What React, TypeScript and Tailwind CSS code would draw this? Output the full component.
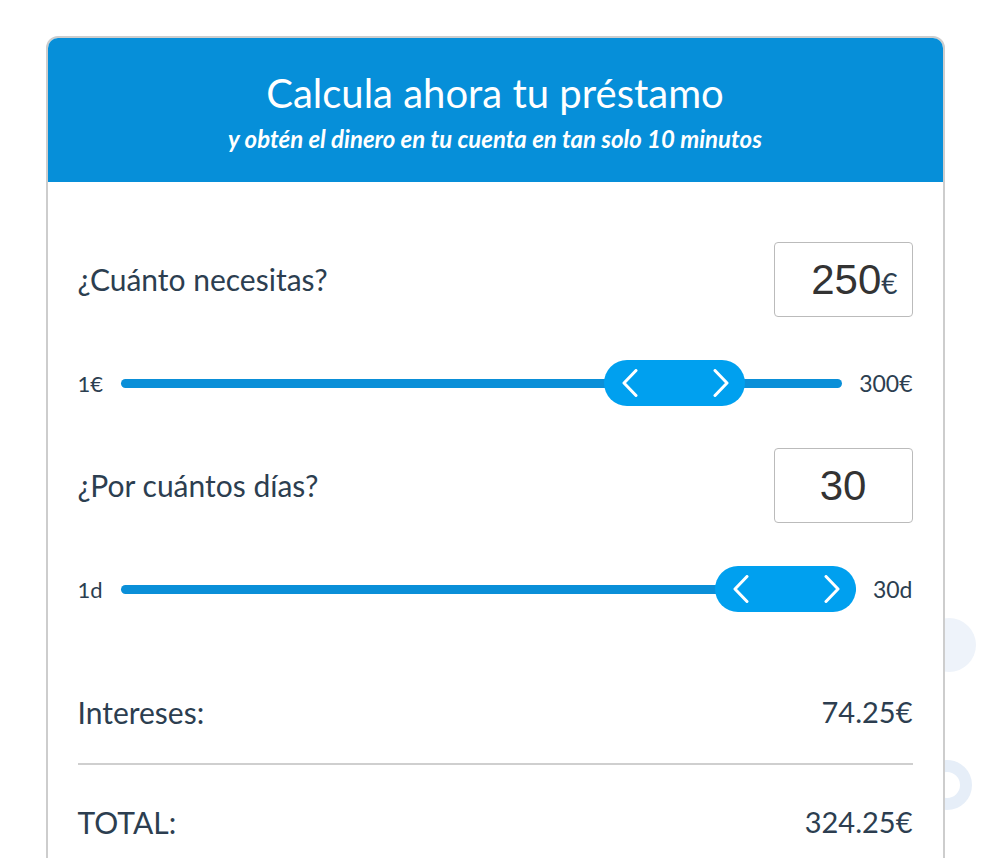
function Chevron({ dir }: { dir: 'left' | 'right' }) {
  return (
    <svg width="16" height="28" viewBox="0 0 16 28" fill="none">
      <polyline
        points={dir === 'left' ? '14,1.5 2,14 14,26.5' : '2,1.5 14,14 2,26.5'}
        stroke="white"
        strokeWidth="3"
        strokeLinecap="round"
        strokeLinejoin="round"
      />
    </svg>
  );
}

function Thumb() {
  return (
    <div className="flex h-[46px] w-[141px] items-center justify-between rounded-full bg-[#00a0ef] pl-[18px] pr-[16px]">
      <Chevron dir="left" />
      <Chevron dir="right" />
    </div>
  );
}

function SliderRow({ min, max, pct }: { min: string; max: string; pct: number }) {
  return (
    <div className="flex items-center h-[46px]">
      <span className="w-[43px] text-[22px] text-[#2c3e50]">{min}</span>
      <div className="relative flex-1 h-[46px] flex items-center">
        <div className="h-[9px] w-full rounded-full bg-[#0a8fd8]" />
        <div className="absolute top-0" style={{ left: `calc(${pct}% - ${(pct / 100) * 141}px)` }}>
          <Thumb />
        </div>
      </div>
      <span className="pl-[17px] text-right text-[23px] text-[#2c3e50]">{max}</span>
    </div>
  );
}

export default function App() {
  return (
    <div className="relative h-[858px] w-[990px] overflow-hidden bg-white font-['Lato',sans-serif]">
      <div className="absolute left-[922px] top-[618px] h-[54px] w-[54px] rounded-full bg-[#eef3fa]" />
      <div className="absolute left-[922px] top-[760px] h-[50px] w-[50px] rounded-full border-[12px] border-[#e6eef8]" />
      <div className="relative mx-auto mt-[36px] w-[899px] overflow-hidden rounded-t-[12px] border-2 border-[#cdcdcd] bg-white">
        <div className="flex h-[144px] flex-col items-center bg-[#068fd9] pt-[31px] text-white">
          <h1 className="text-[40px] leading-[48px]">Calcula ahora tu préstamo</h1>
          <p className="mt-[8px] text-[24px] font-bold italic leading-[28px]">
            y obtén el dinero en tu cuenta en tan solo 10 minutos
          </p>
        </div>
        <div className="px-[30px] pt-[60px] pb-[40px] text-[#2c3e50]">
          <div className="flex items-center justify-between">
            <span className="text-[30px]">¿Cuánto necesitas?</span>
            <div className="flex h-[75px] w-[139px] items-center justify-end rounded-[4px] border border-[#bbbbbb] pr-[14px]">
              <span className="font-['Liberation_Sans',sans-serif] text-[42px] text-[#333]">250</span>
              <span className="mt-[6px] text-[28px]">€</span>
            </div>
          </div>
          <div className="mt-[43px]">
            <SliderRow min="1€" max="300€" pct={83.3} />
          </div>
          <div className="mt-[42px] flex items-center justify-between">
            <span className="text-[30px]">¿Por cuántos días?</span>
            <div className="flex h-[75px] w-[139px] items-center justify-center rounded-[4px] border border-[#bbbbbb]">
              <span className="font-['Liberation_Sans',sans-serif] text-[42px] text-[#333]">30</span>
            </div>
          </div>
          <div className="mt-[43px]">
            <SliderRow min="1d" max="30d" pct={100} />
          </div>
          <div className="mt-[80px] flex items-center justify-between text-[30px] leading-[40px]">
            <span>Intereses:</span>
            <span className="text-[29px]">74.25€</span>
          </div>
          <div className="mt-[31px] h-[2px] bg-[#cfcfcf]" />
          <div className="mt-[37px] flex items-center justify-between text-[30px] leading-[40px]">
            <span>TOTAL:</span>
            <span className="text-[29px]">324.25€</span>
          </div>
        </div>
      </div>
    </div>
  );
}
